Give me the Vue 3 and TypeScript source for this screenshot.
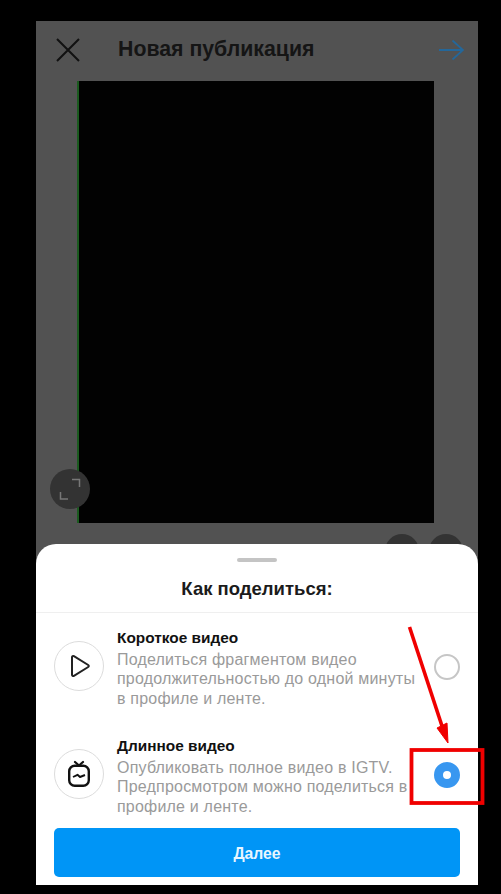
<script setup lang="ts">
interface Option {
  title: string;
  lines: string[];
  kind: "play" | "igtv";
  selected: boolean;
}

const options: Option[] = [
  {
    title: "Короткое видео",
    lines: [
      "Поделиться фрагментом видео",
      "продолжительностью до одной минуты",
      "в профиле и ленте.",
    ],
    kind: "play",
    selected: false,
  },
  {
    title: "Длинное видео",
    lines: [
      "Опубликовать полное видео в IGTV.",
      "Предпросмотром можно поделиться в",
      "профиле и ленте.",
    ],
    kind: "igtv",
    selected: true,
  },
];
</script>

<template>
  <div class="page">
    <div class="phone">
      <header class="topbar">
        <svg class="close" width="26" height="26" viewBox="0 0 26 26" fill="none">
          <path d="M2 2 L24 24 M24 2 L2 24" stroke="#111" stroke-width="2" />
        </svg>
        <h1 class="topbar-title">Новая публикация</h1>
        <svg class="next" width="28" height="24" viewBox="0 0 28 24" fill="none">
          <path d="M3 12 H27 M16.5 2.5 L27 12 L16.5 21.5" stroke="#24679a" stroke-width="1.8" />
        </svg>
      </header>

      <div class="media">
        <div class="video"></div>
        <div class="expand">
          <svg width="26" height="26" viewBox="0 0 26 26" fill="none">
            <path d="M15 3.5 H22.5 V11 M3.5 16 V23 H11" stroke="#777" stroke-width="1.5" />
          </svg>
        </div>
      </div>

      <div class="round-buttons">
        <span class="round"></span>
        <span class="round"></span>
      </div>

      <section class="sheet">
        <div class="handle"></div>
        <h2 class="sheet-title">Как поделиться:</h2>
        <div class="options">
          <div v-for="o in options" :key="o.title" class="option">
            <div class="icon">
              <svg v-if="o.kind === 'play'" width="22" height="24" viewBox="0 0 22 24" fill="none">
                <path
                  d="M4 3.2 C4 2.2 5 1.7 5.9 2.2 L20.2 11 C21 11.5 21 12.5 20.2 13 L5.9 21.8 C5 22.3 4 21.8 4 20.8 Z"
                  stroke="#222"
                  stroke-width="2"
                  stroke-linejoin="round"
                />
              </svg>
              <svg v-else width="26" height="28" viewBox="0 0 26 28" fill="none">
                <path d="M9 2 L13 5.5 L17 2" stroke="#111" stroke-width="2.2" stroke-linecap="round" stroke-linejoin="round" />
                <rect x="3.2" y="5.8" width="19.6" height="20" rx="5.5" stroke="#111" stroke-width="2.4" />
                <path d="M7 17 L11.5 14.8 L14 17 L19 15" stroke="#111" stroke-width="1.9" stroke-linejoin="round" />
              </svg>
            </div>
            <div class="copy">
              <div class="option-title">{{ o.title }}</div>
              <div v-for="l in o.lines" :key="l" class="option-line">{{ l }}</div>
            </div>
            <span class="radio" :class="{ on: o.selected }"></span>
          </div>
        </div>
        <button class="cta" type="button">Далее</button>
      </section>
    </div>

    <svg class="annotation" width="501" height="894" viewBox="0 0 501 894" fill="none">
      <path d="M409.5 627 L442 726" stroke="#f00000" stroke-width="3.6" />
      <path d="M448 743 L437 728 L447 723 Z" fill="#f00000" stroke="#f00000" stroke-width="1" />
      <rect x="411.5" y="750" width="71" height="53" stroke="#f00000" stroke-width="3.8" />
    </svg>
  </div>
</template>

<style>
html,
body {
  margin: 0;
  background: #000;
}
</style>

<style scoped>
.page {
  position: relative;
  width: 501px;
  height: 894px;
  background: #000;
  overflow: hidden;
  padding: 21px 23px 9px 36px;
  box-sizing: border-box;
  font-family: "Liberation Sans", Arial, sans-serif;
}

.phone {
  position: relative;
  height: 864px;
  background: #525252;
  display: flex;
  flex-direction: column;
  overflow: hidden;
}

.topbar {
  height: 60px;
  flex: none;
  display: flex;
  align-items: center;
  padding: 0 14px 0 19px;
}

.close {
  flex: none;
  margin-top: -3px;
}

.topbar-title {
  margin: -4px 0 0 37px;
  flex: 1;
  font-size: 21.3px;
  font-weight: 700;
  color: #151515;
}

.next {
  flex: none;
  margin-top: -3px;
}

.media {
  position: relative;
  height: 442px;
  flex: none;
  padding-left: 41px;
}

.video {
  width: 357px;
  height: 442px;
  box-sizing: border-box;
  background: #020202;
  border-left: 2px solid #1b5a1f;
}

.expand {
  position: absolute;
  left: 14px;
  bottom: 14px;
  width: 40px;
  height: 40px;
  border-radius: 50%;
  background: #333;
  display: flex;
  align-items: center;
  justify-content: center;
}

.round-buttons {
  position: absolute;
  top: 513px;
  right: 15px;
  display: flex;
  gap: 10px;
}

.round {
  width: 34px;
  height: 34px;
  border-radius: 50%;
  background: #333;
}

.sheet {
  position: absolute;
  left: 0;
  right: 0;
  bottom: 0;
  height: 341px;
  box-sizing: border-box;
  background: #fff;
  border-radius: 20px 20px 0 0;
  display: flex;
  flex-direction: column;
}

.handle {
  width: 40px;
  height: 4px;
  margin: 14px auto 0;
  border-radius: 2px;
  background: #c4c4c4;
}

.sheet-title {
  margin: 0;
  height: 50px;
  flex: none;
  line-height: 54px;
  text-align: center;
  font-size: 18.5px;
  font-weight: 700;
  color: #1b1b1b;
  border-bottom: 1px solid #efefef;
  box-sizing: content-box;
}

.options {
  display: flex;
  flex-direction: column;
  gap: 26px;
  padding-top: 13px;
}

.option {
  display: flex;
  align-items: center;
  padding: 0 18px;
  height: 82px;
}

.icon {
  flex: none;
  width: 48px;
  height: 48px;
  margin-top: -3px;
  border: 1px solid #dcdcdc;
  border-radius: 50%;
  display: flex;
  align-items: center;
  justify-content: center;
}

.copy {
  flex: 1;
  min-width: 0;
  margin-left: 13px;
  padding-top: 2px;
  white-space: nowrap;
}

.option-title {
  font-size: 15.4px;
  line-height: 20px;
  font-weight: 700;
  color: #111;
  margin-bottom: 2px;
}

.option-line {
  font-size: 16px;
  letter-spacing: 0.2px;
  line-height: 19.5px;
  color: #9a9a9a;
}

.radio {
  flex: none;
  width: 26px;
  height: 26px;
  box-sizing: border-box;
  border: 2px solid #c6c6c6;
  border-radius: 50%;
  background: #fff;
}

.radio.on {
  border: 9px solid #3897f0;
  background: #fff;
}

.cta {
  margin: auto 18px 8px;
  height: 49px;
  flex: none;
  border: 0;
  border-radius: 5px;
  padding-top: 3px;
  background: #0095f6;
  color: #e8f6ff;
  font-family: inherit;
  font-size: 15.7px;
  font-weight: 700;
}

.annotation {
  position: absolute;
  left: 0;
  top: 0;
  pointer-events: none;
}
</style>
